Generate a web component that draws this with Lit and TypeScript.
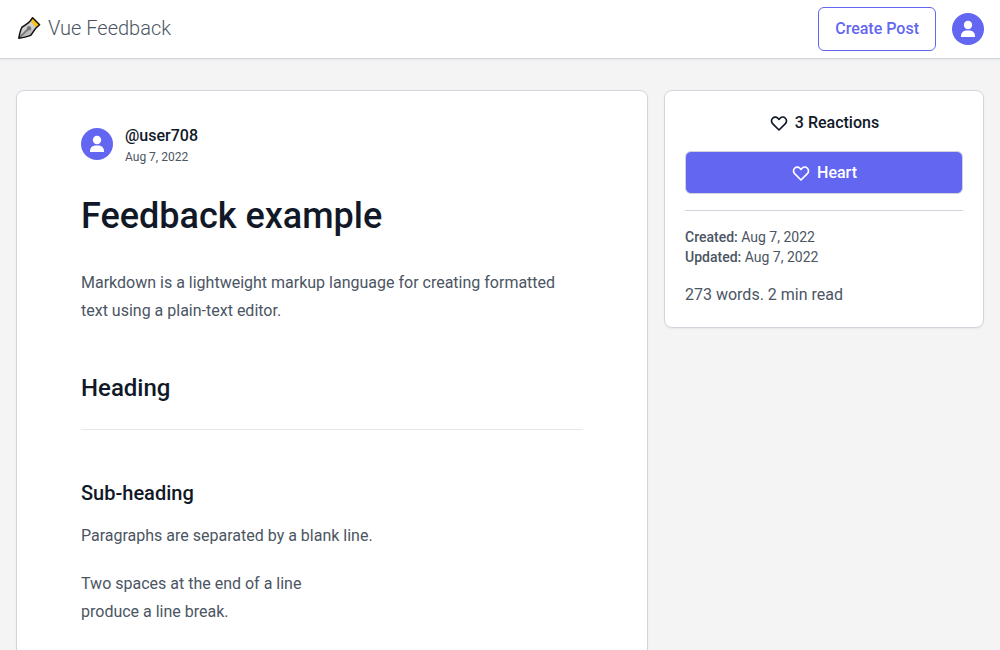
import { LitElement, html, css } from "lit";
import { customElement } from "lit/decorators.js";

const user = html`<svg class="user" viewBox="0 0 32 32" aria-hidden="true">
  <circle cx="16" cy="12" r="4.2"></circle>
  <path d="M9 24v-1C9 19.8 11.6 17.6 14.6 17.6h2.8c3 0 5.6 2.2 5.6 5.4v1z"></path>
</svg>`;

const heart = html`<svg class="heart" viewBox="0 0 24 24" aria-hidden="true">
  <path d="M4.318 6.318a4.5 4.5 0 000 6.364L12 20.364l7.682-7.682a4.5 4.5 0 00-6.364-6.364L12 7.636l-1.318-1.318a4.5 4.5 0 00-6.364 0z"></path>
</svg>`;

const nib = html`<svg class="nib" viewBox="0 0 24 24" aria-hidden="true">
  <path d="M2 22 4.8 11.6 14.6 4.4 20.2 10.4 14 19.2Z" fill="#d0d0d0"></path>
  <path d="M2 22 12 12 17 14.8 14 19.2Z" fill="#bcbcbc"></path>
  <path d="M13.2 4.8 15.6 1.8 22.6 8.8 19.2 11.8Z" fill="#fcc21b"></path>
  <path d="M2.4 21.6 11.2 13" stroke="#777" stroke-width="1.8"></path>
  <circle cx="12" cy="12.2" r="2.2" fill="#777"></circle>
  <path d="M1.8 22.2C2.6 17.8 3.4 14 5 11.2 7.8 9 11 7.6 13.2 5L15.6 1.8 22.6 8.8 19.2 11.8C17 14 16 17 13.6 19.4 10 21 6 21.6 1.8 22.2Z" fill="none" stroke="#111" stroke-width="1.5" stroke-linejoin="round"></path>
</svg>`;

@customElement("app-root")
export class AppRoot extends LitElement {
  static styles = css`
    :host {
      display: block;
      min-height: 100vh;
      background: #f4f4f4;
      color: #4b5563;
      font: 400 16px/24px Roboto, sans-serif;
    }
    *, *::before, *::after { box-sizing: border-box; }
    h1, h2, h3, p, dl, dd { margin: 0; }
    a { color: inherit; text-decoration: none; }
    .header {
      display: flex;
      align-items: center;
      justify-content: space-between;
      padding: 7px 16px;
      background: #fff;
      box-shadow: 0 0 0 1px #d1d5db, 0 1px 3px 1px rgb(0 0 0 / 6%);
    }
    .brand {
      display: flex;
      align-items: center;
      gap: 6px;
      padding-bottom: 2px;
      font-size: 20px;
      font-weight: 300;
      line-height: 28px;
    }
    .nib { width: 26px; height: 26px; padding: 1px; }
    .actions { display: flex; align-items: center; gap: 16px; }
    .button {
      display: flex;
      align-items: center;
      justify-content: center;
      gap: 6px;
      padding: 9px 16px;
      border: 1px solid #6366f1;
      border-radius: 6px;
      background: #fff;
      color: #6366f1;
      font: inherit;
      font-weight: 500;
      cursor: pointer;
    }
    .primary {
      width: 100%;
      padding-bottom: 8px;
      border-color: #d1d5db;
      background: #6366f1;
      color: #fff;
    }
    .avatar {
      display: block;
      flex: none;
      width: 32px;
      height: 32px;
      padding: 0;
      border: 0;
      border-radius: 50%;
      background: #6366f1;
      cursor: pointer;
    }
    .user { display: block; width: 32px; height: 32px; fill: #fff; }
    .heart {
      width: 20px;
      height: 20px;
      fill: none;
      stroke: currentColor;
      stroke-width: 2;
      stroke-linecap: round;
      stroke-linejoin: round;
    }
    .layout {
      display: grid;
      grid-template-columns: minmax(0, 1fr) 320px;
      align-items: start;
      gap: 16px;
      padding: 32px 16px;
    }
    .card {
      border: 1px solid #d1d5db;
      border-radius: 8px;
      background: #fff;
      box-shadow: 0 1px 2px rgb(0 0 0 / 5%);
    }
    .post { padding: 31px 64px 64px; }
    .author { display: flex; align-items: center; gap: 12px; }
    .byline { padding-top: 2px; }
    .name { color: #111827; font-weight: 500; line-height: 24px; }
    .date { display: block; font-size: 12px; line-height: 18px; }
    .title {
      margin: 30px 0 33px;
      color: #111827;
      font-size: 36px;
      font-weight: 500;
      line-height: 40px;
    }
    .text { margin-bottom: 20px; line-height: 28px; }
    .heading {
      margin: 47px 0 25px;
      color: #111827;
      font-size: 24px;
      font-weight: 500;
      line-height: 32px;
    }
    .rule { margin: 0 0 47px; border: 0; border-top: 1px solid #e5e7eb; }
    .subheading {
      margin-bottom: 13px;
      color: #111827;
      font-size: 20px;
      font-weight: 500;
      line-height: 32px;
    }
    .side { display: grid; gap: 16px; padding: 20px; }
    .count {
      display: flex;
      align-items: center;
      justify-content: center;
      gap: 6px;
      color: #111827;
      font-weight: 500;
    }
    .divider { width: 100%; margin: 0; border: 0; border-top: 1px solid #d1d5db; }
    .meta { font-size: 14px; line-height: 20px; }
    .meta dt { display: inline; font-weight: 500; }
    .meta dd { display: inline; }
    @media (max-width: 760px) {
      .layout { grid-template-columns: minmax(0, 1fr); }
      .post { padding: 24px; }
    }
  `;

  render() {
    return html`
      <header class="header">
        <a class="brand" href="#">${nib}<span>Vue Feedback</span></a>
        <div class="actions">
          <button class="button" type="button">Create Post</button>
          <button class="avatar" type="button" aria-label="Account">${user}</button>
        </div>
      </header>
      <main class="layout">
        <article class="card post">
          <div class="author">
            <a class="avatar" href="#" aria-label="user708">${user}</a>
            <div class="byline">
              <a class="name" href="#">@user708</a>
              <time class="date" datetime="2022-08-07">Aug 7, 2022</time>
            </div>
          </div>
          <h1 class="title">Feedback example</h1>
          <p class="text">Markdown is a lightweight markup language for creating formatted text using a plain-text editor.</p>
          <h2 class="heading">Heading</h2>
          <hr class="rule" />
          <h3 class="subheading">Sub-heading</h3>
          <p class="text">Paragraphs are separated by a blank line.</p>
          <p class="text">Two spaces at the end of a line<br />produce a line break.</p>
        </article>
        <aside class="card side">
          <div class="count">${heart}<span>3 Reactions</span></div>
          <button class="button primary" type="button">${heart}<span>Heart</span></button>
          <hr class="divider" />
          <dl class="meta">
            <div><dt>Created:</dt> <dd>Aug 7, 2022</dd></div>
            <div><dt>Updated:</dt> <dd>Aug 7, 2022</dd></div>
          </dl>
          <p>273 words. 2 min read</p>
        </aside>
      </main>
    `;
  }
}
